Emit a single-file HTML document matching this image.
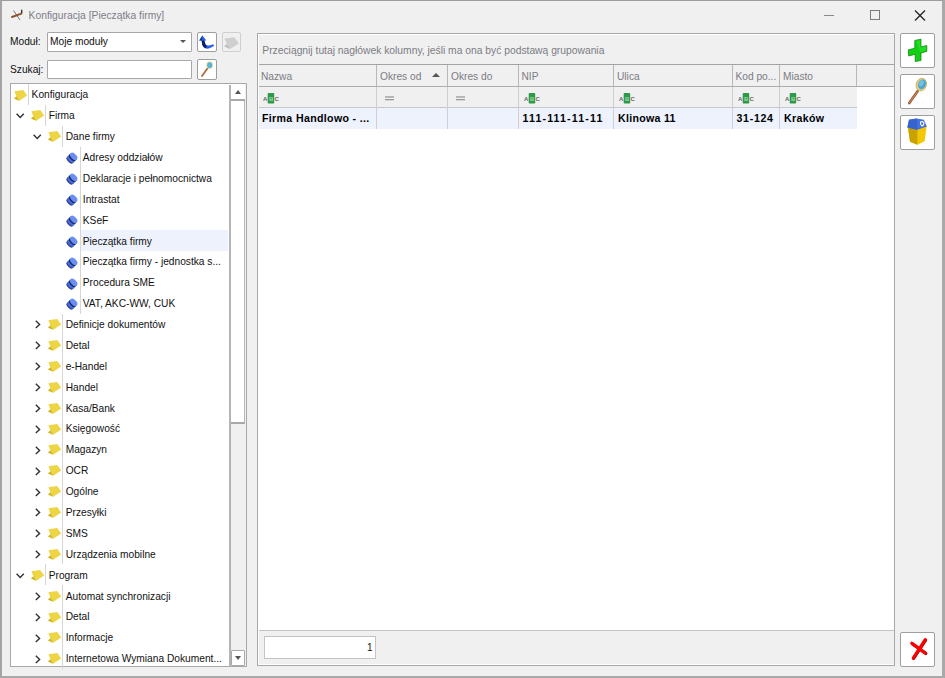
<!DOCTYPE html>
<html><head><meta charset="utf-8">
<style>
*{box-sizing:border-box;margin:0;padding:0}
html,body{width:945px;height:678px;overflow:hidden;background:#f0f0f0;font-family:"Liberation Sans",sans-serif;font-size:10.5px;color:#000}
.a{position:absolute}
svg{display:block}
.title{position:absolute;left:28.6px;top:8.7px;font-size:10.3px;color:#7d7d88;white-space:nowrap;line-height:14px}
.lbl{position:absolute;white-space:nowrap;color:#101010;line-height:14px;font-size:10.2px}
.inp{position:absolute;background:#fff;border:1px solid #a8a8a8;border-radius:1px}
.btn{position:absolute;background:#fff;border:1.6px solid #9e9e9e;border-radius:2px}
.sep{position:absolute;width:1px;background:#d6d6d6}
.hl{position:absolute;background:#edf2fd}
.tt{position:absolute;white-space:nowrap;line-height:20.85px;height:20.85px;color:#111;padding-top:1.4px;font-size:10.2px}
.gh{position:absolute;color:#7c7c84;white-space:nowrap;line-height:14px}
.vl{position:absolute;width:1px}
.dt{position:absolute;font-weight:bold;white-space:nowrap;color:#000;font-size:10.6px;line-height:14px}
</style></head><body>
<div class="a" style="left:0;top:0;width:945px;height:678px;border-left:2px solid #a4a4a4;border-top:1px solid #9c9c9c;border-right:3px solid #a9a9a9;border-bottom:2px solid #a9a9a9"></div>
<!-- title bar -->
<div class="a" style="left:11px;top:9px"><svg width="13" height="12" viewBox="0 0 13 12"><line x1="2.5" y1="1.5" x2="9" y2="11" stroke="#777" stroke-width="1"/><line x1="1" y1="8" x2="10.3" y2="4.6" stroke="#8e5032" stroke-width="2" stroke-linecap="round"/><line x1="10.6" y1="0.8" x2="10.8" y2="4" stroke="#333" stroke-width="1.4"/></svg></div>
<div class="title">Konfiguracja [Pieczątka firmy]</div>
<div class="a" style="left:824px;top:15px;width:10px;height:1px;background:#8a8a8a"></div>
<div class="a" style="left:870px;top:10px;width:10px;height:10px;border:1px solid #7a7a7a"></div>
<div class="a" style="left:914px;top:10px"><svg width="12" height="11" viewBox="0 0 12 11"><line x1="1" y1="0.5" x2="11" y2="10.5" stroke="#222" stroke-width="1.2"/><line x1="11" y1="0.5" x2="1" y2="10.5" stroke="#222" stroke-width="1.2"/></svg></div>

<!-- module / search -->
<div class="lbl" style="left:10px;top:35px">Moduł:</div>
<div class="inp" style="left:47px;top:32px;width:145px;height:19.5px"></div>
<div class="lbl" style="left:50px;top:35px">Moje moduły</div>
<div class="a" style="left:180px;top:40px;width:0;height:0;border-left:3.5px solid transparent;border-right:3.5px solid transparent;border-top:3.5px solid #555"></div>
<div class="btn" style="left:197px;top:32px;width:19.5px;height:20px"></div>
<div class="a" style="left:198px;top:34px"><svg width="18" height="17" viewBox="0 0 18 17"><path d="M4.4 1.6 L1.2 6.6 L3.6 6.6 L4.2 10.5 Q5 14 8.5 14.6 Q11 15 13.2 13.6 Q15 12.4 16.2 12 L15.2 10.2 Q13 11 10.8 11.4 Q8 11.8 7.2 9.6 L6.4 6.6 L8.4 6.6 Z" fill="#2a62e6"/><path d="M3.6 6.6 L4.2 10.5 Q5 13.6 8.2 14.4 L8.6 12 Q7.4 11.2 7.1 9.6 L6.4 6.6 Z" fill="#0e1f5e"/><path d="M4.4 1.6 L1.2 6.6 L4 6.6 Z" fill="#163a9a"/></svg></div>
<div class="a" style="left:222px;top:32px;width:19px;height:20px;border:1.2px solid #cfcfcf;border-radius:2px;background:#f0f0f0"></div>
<div class="a" style="left:223.8px;top:36.6px"><svg width="15.5" height="13" viewBox="0 0 14 12" preserveAspectRatio="none"><polygon points="0.4,1.4 9.4,0.2 13.4,6 5.4,11 0.2,8.6 2.6,6.8" fill="#cfcfcf"/><polygon points="0.2,8.6 2.6,6.8 5.4,11" fill="#bdbdbd"/></svg></div>

<div class="lbl" style="left:10px;top:63px">Szukaj:</div>
<div class="inp" style="left:47px;top:60px;width:145px;height:19px"></div>
<div class="btn" style="left:197px;top:59px;width:20px;height:21px"></div>
<div class="a" style="left:200px;top:61px"><svg width="14" height="17" viewBox="0 0 14 17"><line x1="2" y1="15" x2="7.6" y2="7.2" stroke="#b06a40" stroke-width="1.8" stroke-linecap="round"/><ellipse cx="9.6" cy="4.2" rx="3.2" ry="3.6" fill="#e8d48a"/><ellipse cx="9.7" cy="4.2" rx="2.5" ry="2.9" fill="#5ab4d8"/></svg></div>

<!-- tree -->
<div class="a" style="left:10px;top:83px;width:237px;height:584px;background:#fff;border:1.5px solid #a8a8a8"></div>
<div class="a" style="left:13.8px;top:89.50px"><svg width="14" height="12" viewBox="0 0 14 12"><polygon points="0.4,1.2 9.2,0 13.2,5.6 5.2,10.8 0,8.4 2.4,6.6" fill="#EDD545"/><polygon points="0,8.4 2.4,6.6 5.2,10.8" fill="#CDB22A"/></svg></div>
<div class="sep" style="left:28.0px;top:84.00px;height:20.88px"></div>
<div class="tt" style="left:31.6px;top:84.00px">Konfiguracja</div>
<div class="a" style="left:16.2px;top:113.48px"><svg width="9" height="6" viewBox="0 0 9 6"><polyline points="0.6,0.8 4.2,4.6 7.8,0.8" fill="none" stroke="#333" stroke-width="1.4"/></svg></div>
<div class="a" style="left:30.9px;top:110.38px"><svg width="14" height="12" viewBox="0 0 14 12"><polygon points="0.4,1.2 9.2,0 13.2,5.6 5.2,10.8 0,8.4 2.4,6.6" fill="#EDD545"/><polygon points="0,8.4 2.4,6.6 5.2,10.8" fill="#CDB22A"/></svg></div>
<div class="sep" style="left:45.2px;top:104.88px;height:20.88px"></div>
<div class="tt" style="left:48.7px;top:104.88px">Firma</div>
<div class="a" style="left:33.4px;top:134.36px"><svg width="9" height="6" viewBox="0 0 9 6"><polyline points="0.6,0.8 4.2,4.6 7.8,0.8" fill="none" stroke="#333" stroke-width="1.4"/></svg></div>
<div class="a" style="left:47.9px;top:131.26px"><svg width="14" height="12" viewBox="0 0 14 12"><polygon points="0.4,1.2 9.2,0 13.2,5.6 5.2,10.8 0,8.4 2.4,6.6" fill="#EDD545"/><polygon points="0,8.4 2.4,6.6 5.2,10.8" fill="#CDB22A"/></svg></div>
<div class="sep" style="left:62.4px;top:125.76px;height:20.88px"></div>
<div class="tt" style="left:65.7px;top:125.76px">Dane firmy</div>
<div class="a" style="left:65.6px;top:152.24px"><svg width="12" height="12" viewBox="0 0 12 12"><g transform="rotate(45 6 6)"><rect x="1.8" y="3.4" width="8.4" height="5.6" fill="#3a5cc8"/><ellipse cx="6" cy="9" rx="4.2" ry="2.2" fill="#2a3f9a"/><ellipse cx="6" cy="7.6" rx="4.3" ry="2.3" fill="#4a6fd6"/><ellipse cx="6" cy="5.4" rx="4.3" ry="2.4" fill="#1c2a70"/><ellipse cx="6" cy="3.6" rx="4.4" ry="2.7" fill="#6a8ef2"/></g></svg></div>
<div class="sep" style="left:79.6px;top:146.64px;height:20.88px"></div>
<div class="tt" style="left:82.8px;top:146.64px">Adresy oddziałów</div>
<div class="a" style="left:65.6px;top:173.12px"><svg width="12" height="12" viewBox="0 0 12 12"><g transform="rotate(45 6 6)"><rect x="1.8" y="3.4" width="8.4" height="5.6" fill="#3a5cc8"/><ellipse cx="6" cy="9" rx="4.2" ry="2.2" fill="#2a3f9a"/><ellipse cx="6" cy="7.6" rx="4.3" ry="2.3" fill="#4a6fd6"/><ellipse cx="6" cy="5.4" rx="4.3" ry="2.4" fill="#1c2a70"/><ellipse cx="6" cy="3.6" rx="4.4" ry="2.7" fill="#6a8ef2"/></g></svg></div>
<div class="sep" style="left:79.6px;top:167.52px;height:20.88px"></div>
<div class="tt" style="left:82.8px;top:167.52px">Deklaracje i pełnomocnictwa</div>
<div class="a" style="left:65.6px;top:194.00px"><svg width="12" height="12" viewBox="0 0 12 12"><g transform="rotate(45 6 6)"><rect x="1.8" y="3.4" width="8.4" height="5.6" fill="#3a5cc8"/><ellipse cx="6" cy="9" rx="4.2" ry="2.2" fill="#2a3f9a"/><ellipse cx="6" cy="7.6" rx="4.3" ry="2.3" fill="#4a6fd6"/><ellipse cx="6" cy="5.4" rx="4.3" ry="2.4" fill="#1c2a70"/><ellipse cx="6" cy="3.6" rx="4.4" ry="2.7" fill="#6a8ef2"/></g></svg></div>
<div class="sep" style="left:79.6px;top:188.40px;height:20.88px"></div>
<div class="tt" style="left:82.8px;top:188.40px">Intrastat</div>
<div class="a" style="left:65.6px;top:214.88px"><svg width="12" height="12" viewBox="0 0 12 12"><g transform="rotate(45 6 6)"><rect x="1.8" y="3.4" width="8.4" height="5.6" fill="#3a5cc8"/><ellipse cx="6" cy="9" rx="4.2" ry="2.2" fill="#2a3f9a"/><ellipse cx="6" cy="7.6" rx="4.3" ry="2.3" fill="#4a6fd6"/><ellipse cx="6" cy="5.4" rx="4.3" ry="2.4" fill="#1c2a70"/><ellipse cx="6" cy="3.6" rx="4.4" ry="2.7" fill="#6a8ef2"/></g></svg></div>
<div class="sep" style="left:79.6px;top:209.28px;height:20.88px"></div>
<div class="tt" style="left:82.8px;top:209.28px">KSeF</div>
<div class="a" style="left:65.6px;top:235.76px"><svg width="12" height="12" viewBox="0 0 12 12"><g transform="rotate(45 6 6)"><rect x="1.8" y="3.4" width="8.4" height="5.6" fill="#3a5cc8"/><ellipse cx="6" cy="9" rx="4.2" ry="2.2" fill="#2a3f9a"/><ellipse cx="6" cy="7.6" rx="4.3" ry="2.3" fill="#4a6fd6"/><ellipse cx="6" cy="5.4" rx="4.3" ry="2.4" fill="#1c2a70"/><ellipse cx="6" cy="3.6" rx="4.4" ry="2.7" fill="#6a8ef2"/></g></svg></div>
<div class="sep" style="left:79.6px;top:230.16px;height:20.88px"></div>
<div class="hl" style="left:80.6px;top:230.16px;width:147.9px;height:20.88px"></div>
<div class="tt" style="left:82.8px;top:230.16px">Pieczątka firmy</div>
<div class="a" style="left:65.6px;top:256.64px"><svg width="12" height="12" viewBox="0 0 12 12"><g transform="rotate(45 6 6)"><rect x="1.8" y="3.4" width="8.4" height="5.6" fill="#3a5cc8"/><ellipse cx="6" cy="9" rx="4.2" ry="2.2" fill="#2a3f9a"/><ellipse cx="6" cy="7.6" rx="4.3" ry="2.3" fill="#4a6fd6"/><ellipse cx="6" cy="5.4" rx="4.3" ry="2.4" fill="#1c2a70"/><ellipse cx="6" cy="3.6" rx="4.4" ry="2.7" fill="#6a8ef2"/></g></svg></div>
<div class="sep" style="left:79.6px;top:251.04px;height:20.88px"></div>
<div class="tt" style="left:82.8px;top:251.04px">Pieczątka firmy - jednostka s...</div>
<div class="a" style="left:65.6px;top:277.52px"><svg width="12" height="12" viewBox="0 0 12 12"><g transform="rotate(45 6 6)"><rect x="1.8" y="3.4" width="8.4" height="5.6" fill="#3a5cc8"/><ellipse cx="6" cy="9" rx="4.2" ry="2.2" fill="#2a3f9a"/><ellipse cx="6" cy="7.6" rx="4.3" ry="2.3" fill="#4a6fd6"/><ellipse cx="6" cy="5.4" rx="4.3" ry="2.4" fill="#1c2a70"/><ellipse cx="6" cy="3.6" rx="4.4" ry="2.7" fill="#6a8ef2"/></g></svg></div>
<div class="sep" style="left:79.6px;top:271.92px;height:20.88px"></div>
<div class="tt" style="left:82.8px;top:271.92px">Procedura SME</div>
<div class="a" style="left:65.6px;top:298.40px"><svg width="12" height="12" viewBox="0 0 12 12"><g transform="rotate(45 6 6)"><rect x="1.8" y="3.4" width="8.4" height="5.6" fill="#3a5cc8"/><ellipse cx="6" cy="9" rx="4.2" ry="2.2" fill="#2a3f9a"/><ellipse cx="6" cy="7.6" rx="4.3" ry="2.3" fill="#4a6fd6"/><ellipse cx="6" cy="5.4" rx="4.3" ry="2.4" fill="#1c2a70"/><ellipse cx="6" cy="3.6" rx="4.4" ry="2.7" fill="#6a8ef2"/></g></svg></div>
<div class="sep" style="left:79.6px;top:292.80px;height:20.88px"></div>
<div class="tt" style="left:82.8px;top:292.80px">VAT, AKC-WW, CUK</div>
<div class="a" style="left:34.6px;top:320.48px"><svg width="6" height="9" viewBox="0 0 6 9"><polyline points="0.8,0.8 4.6,4.4 0.8,8" fill="none" stroke="#333" stroke-width="1.4"/></svg></div>
<div class="a" style="left:47.9px;top:319.18px"><svg width="14" height="12" viewBox="0 0 14 12"><polygon points="0.4,1.2 9.2,0 13.2,5.6 5.2,10.8 0,8.4 2.4,6.6" fill="#EDD545"/><polygon points="0,8.4 2.4,6.6 5.2,10.8" fill="#CDB22A"/></svg></div>
<div class="sep" style="left:62.4px;top:313.68px;height:20.88px"></div>
<div class="tt" style="left:65.7px;top:313.68px">Definicje dokumentów</div>
<div class="a" style="left:34.6px;top:341.36px"><svg width="6" height="9" viewBox="0 0 6 9"><polyline points="0.8,0.8 4.6,4.4 0.8,8" fill="none" stroke="#333" stroke-width="1.4"/></svg></div>
<div class="a" style="left:47.9px;top:340.06px"><svg width="14" height="12" viewBox="0 0 14 12"><polygon points="0.4,1.2 9.2,0 13.2,5.6 5.2,10.8 0,8.4 2.4,6.6" fill="#EDD545"/><polygon points="0,8.4 2.4,6.6 5.2,10.8" fill="#CDB22A"/></svg></div>
<div class="sep" style="left:62.4px;top:334.56px;height:20.88px"></div>
<div class="tt" style="left:65.7px;top:334.56px">Detal</div>
<div class="a" style="left:34.6px;top:362.24px"><svg width="6" height="9" viewBox="0 0 6 9"><polyline points="0.8,0.8 4.6,4.4 0.8,8" fill="none" stroke="#333" stroke-width="1.4"/></svg></div>
<div class="a" style="left:47.9px;top:360.94px"><svg width="14" height="12" viewBox="0 0 14 12"><polygon points="0.4,1.2 9.2,0 13.2,5.6 5.2,10.8 0,8.4 2.4,6.6" fill="#EDD545"/><polygon points="0,8.4 2.4,6.6 5.2,10.8" fill="#CDB22A"/></svg></div>
<div class="sep" style="left:62.4px;top:355.44px;height:20.88px"></div>
<div class="tt" style="left:65.7px;top:355.44px">e-Handel</div>
<div class="a" style="left:34.6px;top:383.12px"><svg width="6" height="9" viewBox="0 0 6 9"><polyline points="0.8,0.8 4.6,4.4 0.8,8" fill="none" stroke="#333" stroke-width="1.4"/></svg></div>
<div class="a" style="left:47.9px;top:381.82px"><svg width="14" height="12" viewBox="0 0 14 12"><polygon points="0.4,1.2 9.2,0 13.2,5.6 5.2,10.8 0,8.4 2.4,6.6" fill="#EDD545"/><polygon points="0,8.4 2.4,6.6 5.2,10.8" fill="#CDB22A"/></svg></div>
<div class="sep" style="left:62.4px;top:376.32px;height:20.88px"></div>
<div class="tt" style="left:65.7px;top:376.32px">Handel</div>
<div class="a" style="left:34.6px;top:404.00px"><svg width="6" height="9" viewBox="0 0 6 9"><polyline points="0.8,0.8 4.6,4.4 0.8,8" fill="none" stroke="#333" stroke-width="1.4"/></svg></div>
<div class="a" style="left:47.9px;top:402.70px"><svg width="14" height="12" viewBox="0 0 14 12"><polygon points="0.4,1.2 9.2,0 13.2,5.6 5.2,10.8 0,8.4 2.4,6.6" fill="#EDD545"/><polygon points="0,8.4 2.4,6.6 5.2,10.8" fill="#CDB22A"/></svg></div>
<div class="sep" style="left:62.4px;top:397.20px;height:20.88px"></div>
<div class="tt" style="left:65.7px;top:397.20px">Kasa/Bank</div>
<div class="a" style="left:34.6px;top:424.88px"><svg width="6" height="9" viewBox="0 0 6 9"><polyline points="0.8,0.8 4.6,4.4 0.8,8" fill="none" stroke="#333" stroke-width="1.4"/></svg></div>
<div class="a" style="left:47.9px;top:423.58px"><svg width="14" height="12" viewBox="0 0 14 12"><polygon points="0.4,1.2 9.2,0 13.2,5.6 5.2,10.8 0,8.4 2.4,6.6" fill="#EDD545"/><polygon points="0,8.4 2.4,6.6 5.2,10.8" fill="#CDB22A"/></svg></div>
<div class="sep" style="left:62.4px;top:418.08px;height:20.88px"></div>
<div class="tt" style="left:65.7px;top:418.08px">Księgowość</div>
<div class="a" style="left:34.6px;top:445.76px"><svg width="6" height="9" viewBox="0 0 6 9"><polyline points="0.8,0.8 4.6,4.4 0.8,8" fill="none" stroke="#333" stroke-width="1.4"/></svg></div>
<div class="a" style="left:47.9px;top:444.46px"><svg width="14" height="12" viewBox="0 0 14 12"><polygon points="0.4,1.2 9.2,0 13.2,5.6 5.2,10.8 0,8.4 2.4,6.6" fill="#EDD545"/><polygon points="0,8.4 2.4,6.6 5.2,10.8" fill="#CDB22A"/></svg></div>
<div class="sep" style="left:62.4px;top:438.96px;height:20.88px"></div>
<div class="tt" style="left:65.7px;top:438.96px">Magazyn</div>
<div class="a" style="left:34.6px;top:466.64px"><svg width="6" height="9" viewBox="0 0 6 9"><polyline points="0.8,0.8 4.6,4.4 0.8,8" fill="none" stroke="#333" stroke-width="1.4"/></svg></div>
<div class="a" style="left:47.9px;top:465.34px"><svg width="14" height="12" viewBox="0 0 14 12"><polygon points="0.4,1.2 9.2,0 13.2,5.6 5.2,10.8 0,8.4 2.4,6.6" fill="#EDD545"/><polygon points="0,8.4 2.4,6.6 5.2,10.8" fill="#CDB22A"/></svg></div>
<div class="sep" style="left:62.4px;top:459.84px;height:20.88px"></div>
<div class="tt" style="left:65.7px;top:459.84px">OCR</div>
<div class="a" style="left:34.6px;top:487.52px"><svg width="6" height="9" viewBox="0 0 6 9"><polyline points="0.8,0.8 4.6,4.4 0.8,8" fill="none" stroke="#333" stroke-width="1.4"/></svg></div>
<div class="a" style="left:47.9px;top:486.22px"><svg width="14" height="12" viewBox="0 0 14 12"><polygon points="0.4,1.2 9.2,0 13.2,5.6 5.2,10.8 0,8.4 2.4,6.6" fill="#EDD545"/><polygon points="0,8.4 2.4,6.6 5.2,10.8" fill="#CDB22A"/></svg></div>
<div class="sep" style="left:62.4px;top:480.72px;height:20.88px"></div>
<div class="tt" style="left:65.7px;top:480.72px">Ogólne</div>
<div class="a" style="left:34.6px;top:508.40px"><svg width="6" height="9" viewBox="0 0 6 9"><polyline points="0.8,0.8 4.6,4.4 0.8,8" fill="none" stroke="#333" stroke-width="1.4"/></svg></div>
<div class="a" style="left:47.9px;top:507.10px"><svg width="14" height="12" viewBox="0 0 14 12"><polygon points="0.4,1.2 9.2,0 13.2,5.6 5.2,10.8 0,8.4 2.4,6.6" fill="#EDD545"/><polygon points="0,8.4 2.4,6.6 5.2,10.8" fill="#CDB22A"/></svg></div>
<div class="sep" style="left:62.4px;top:501.60px;height:20.88px"></div>
<div class="tt" style="left:65.7px;top:501.60px">Przesyłki</div>
<div class="a" style="left:34.6px;top:529.28px"><svg width="6" height="9" viewBox="0 0 6 9"><polyline points="0.8,0.8 4.6,4.4 0.8,8" fill="none" stroke="#333" stroke-width="1.4"/></svg></div>
<div class="a" style="left:47.9px;top:527.98px"><svg width="14" height="12" viewBox="0 0 14 12"><polygon points="0.4,1.2 9.2,0 13.2,5.6 5.2,10.8 0,8.4 2.4,6.6" fill="#EDD545"/><polygon points="0,8.4 2.4,6.6 5.2,10.8" fill="#CDB22A"/></svg></div>
<div class="sep" style="left:62.4px;top:522.48px;height:20.88px"></div>
<div class="tt" style="left:65.7px;top:522.48px">SMS</div>
<div class="a" style="left:34.6px;top:550.16px"><svg width="6" height="9" viewBox="0 0 6 9"><polyline points="0.8,0.8 4.6,4.4 0.8,8" fill="none" stroke="#333" stroke-width="1.4"/></svg></div>
<div class="a" style="left:47.9px;top:548.86px"><svg width="14" height="12" viewBox="0 0 14 12"><polygon points="0.4,1.2 9.2,0 13.2,5.6 5.2,10.8 0,8.4 2.4,6.6" fill="#EDD545"/><polygon points="0,8.4 2.4,6.6 5.2,10.8" fill="#CDB22A"/></svg></div>
<div class="sep" style="left:62.4px;top:543.36px;height:20.88px"></div>
<div class="tt" style="left:65.7px;top:543.36px">Urządzenia mobilne</div>
<div class="a" style="left:16.2px;top:572.84px"><svg width="9" height="6" viewBox="0 0 9 6"><polyline points="0.6,0.8 4.2,4.6 7.8,0.8" fill="none" stroke="#333" stroke-width="1.4"/></svg></div>
<div class="a" style="left:30.9px;top:569.74px"><svg width="14" height="12" viewBox="0 0 14 12"><polygon points="0.4,1.2 9.2,0 13.2,5.6 5.2,10.8 0,8.4 2.4,6.6" fill="#EDD545"/><polygon points="0,8.4 2.4,6.6 5.2,10.8" fill="#CDB22A"/></svg></div>
<div class="sep" style="left:45.2px;top:564.24px;height:20.88px"></div>
<div class="tt" style="left:48.7px;top:564.24px">Program</div>
<div class="a" style="left:34.6px;top:591.92px"><svg width="6" height="9" viewBox="0 0 6 9"><polyline points="0.8,0.8 4.6,4.4 0.8,8" fill="none" stroke="#333" stroke-width="1.4"/></svg></div>
<div class="a" style="left:47.9px;top:590.62px"><svg width="14" height="12" viewBox="0 0 14 12"><polygon points="0.4,1.2 9.2,0 13.2,5.6 5.2,10.8 0,8.4 2.4,6.6" fill="#EDD545"/><polygon points="0,8.4 2.4,6.6 5.2,10.8" fill="#CDB22A"/></svg></div>
<div class="sep" style="left:62.4px;top:585.12px;height:20.88px"></div>
<div class="tt" style="left:65.7px;top:585.12px">Automat synchronizacji</div>
<div class="a" style="left:34.6px;top:612.80px"><svg width="6" height="9" viewBox="0 0 6 9"><polyline points="0.8,0.8 4.6,4.4 0.8,8" fill="none" stroke="#333" stroke-width="1.4"/></svg></div>
<div class="a" style="left:47.9px;top:611.50px"><svg width="14" height="12" viewBox="0 0 14 12"><polygon points="0.4,1.2 9.2,0 13.2,5.6 5.2,10.8 0,8.4 2.4,6.6" fill="#EDD545"/><polygon points="0,8.4 2.4,6.6 5.2,10.8" fill="#CDB22A"/></svg></div>
<div class="sep" style="left:62.4px;top:606.00px;height:20.88px"></div>
<div class="tt" style="left:65.7px;top:606.00px">Detal</div>
<div class="a" style="left:34.6px;top:633.68px"><svg width="6" height="9" viewBox="0 0 6 9"><polyline points="0.8,0.8 4.6,4.4 0.8,8" fill="none" stroke="#333" stroke-width="1.4"/></svg></div>
<div class="a" style="left:47.9px;top:632.38px"><svg width="14" height="12" viewBox="0 0 14 12"><polygon points="0.4,1.2 9.2,0 13.2,5.6 5.2,10.8 0,8.4 2.4,6.6" fill="#EDD545"/><polygon points="0,8.4 2.4,6.6 5.2,10.8" fill="#CDB22A"/></svg></div>
<div class="sep" style="left:62.4px;top:626.88px;height:20.88px"></div>
<div class="tt" style="left:65.7px;top:626.88px">Informacje</div>
<div class="a" style="left:34.6px;top:654.56px"><svg width="6" height="9" viewBox="0 0 6 9"><polyline points="0.8,0.8 4.6,4.4 0.8,8" fill="none" stroke="#333" stroke-width="1.4"/></svg></div>
<div class="a" style="left:47.9px;top:653.26px"><svg width="14" height="12" viewBox="0 0 14 12"><polygon points="0.4,1.2 9.2,0 13.2,5.6 5.2,10.8 0,8.4 2.4,6.6" fill="#EDD545"/><polygon points="0,8.4 2.4,6.6 5.2,10.8" fill="#CDB22A"/></svg></div>
<div class="sep" style="left:62.4px;top:647.76px;height:20.88px"></div>
<div class="tt" style="left:65.7px;top:647.76px">Internetowa Wymiana Dokument...</div>
<!-- scrollbar -->
<div class="a" style="left:229px;top:84.5px;width:17px;height:581px;background:#f0f0f0;border-left:2px solid #b4b4b4"></div>
<div class="a" style="left:231px;top:84.5px;width:14px;height:16.5px;background:#fff;border-bottom:2px solid #a8a8a8"></div>
<div class="a" style="left:234.5px;top:90px;width:0;height:0;border-left:3.5px solid transparent;border-right:3.5px solid transparent;border-bottom:4px solid #555"></div>
<div class="a" style="left:231px;top:101px;width:14px;height:323px;background:#fff;border-right:1px solid #b8b8b8;border-bottom:2px solid #a8a8a8"></div>
<div class="a" style="left:230.5px;top:650px;width:14.5px;height:16px;background:#fff;border:1.5px solid #a8a8a8;border-radius:1px"></div>
<div class="a" style="left:234.5px;top:656px;width:0;height:0;border-left:3.5px solid transparent;border-right:3.5px solid transparent;border-top:4px solid #555"></div>

<!-- grid -->
<div class="a" style="left:257px;top:33px;width:638px;height:632.5px;background:#fff;border:1.5px solid #a8a8a8"></div>
<div class="a" style="left:258.5px;top:34.5px;width:635px;height:30px;background:#f0f0f0"></div>
<div class="gh" style="left:262.3px;top:44.3px;font-size:10.3px">Przeciągnij tutaj nagłówek kolumny, jeśli ma ona być podstawą grupowania</div>
<div class="a" style="left:258.5px;top:65px;width:635px;height:22px;background:#f0f0f0;border-bottom:1.5px solid #acacac"></div>
<div class="a" style="left:258.5px;top:63.6px;width:635px;height:1.8px;background:#a4a4a4"></div>
<div class="a" style="left:258.5px;top:87px;width:598px;height:21px;background:#f0f0f0;border-bottom:1px solid #c8c8c8"></div>
<div class="a" style="left:258.5px;top:108px;width:598px;height:20.5px;background:#edf2fd"></div>
<div class="vl" style="left:376.0px;top:65px;height:21px;background:#b8b8b8"></div>
<div class="vl" style="left:376.0px;top:87px;height:41.5px;background:#cfcfcf"></div>
<div class="vl" style="left:447.0px;top:65px;height:21px;background:#b8b8b8"></div>
<div class="vl" style="left:447.0px;top:87px;height:41.5px;background:#cfcfcf"></div>
<div class="vl" style="left:517.5px;top:65px;height:21px;background:#b8b8b8"></div>
<div class="vl" style="left:517.5px;top:87px;height:41.5px;background:#cfcfcf"></div>
<div class="vl" style="left:613.0px;top:65px;height:21px;background:#b8b8b8"></div>
<div class="vl" style="left:613.0px;top:87px;height:41.5px;background:#cfcfcf"></div>
<div class="vl" style="left:731.5px;top:65px;height:21px;background:#b8b8b8"></div>
<div class="vl" style="left:731.5px;top:87px;height:41.5px;background:#cfcfcf"></div>
<div class="vl" style="left:779.0px;top:65px;height:21px;background:#b8b8b8"></div>
<div class="vl" style="left:779.0px;top:87px;height:41.5px;background:#cfcfcf"></div>
<div class="vl" style="left:856.0px;top:65px;height:21px;background:#b8b8b8"></div>
<div class="gh" style="left:261.0px;top:69.5px;font-size:10.2px">Nazwa</div>
<div class="a" style="left:263.1px;top:92.6px"><svg width="16" height="11" viewBox="0 0 16 11"><text x="0" y="8" font-family="Liberation Sans" font-size="6" font-weight="bold" fill="#666">A</text><rect x="4.7" y="0" width="6.5" height="10.5" rx="0.8" fill="#2e9a48"/><text x="5.9" y="8" font-family="Liberation Sans" font-size="6" font-weight="bold" fill="#9fd8a8">B</text><text x="11.6" y="8" font-family="Liberation Sans" font-size="6" font-weight="bold" fill="#666">C</text></svg></div>
<div class="dt" style="left:262.0px;top:111.2px;letter-spacing:0.35px">Firma Handlowo - ...</div>
<div class="gh" style="left:380.0px;top:69.5px;font-size:10.2px">Okres od</div>
<div class="a" style="left:384.5px;top:95.8px"><svg width="10" height="5" viewBox="0 0 10 5"><rect x="0" y="0.3" width="9" height="1.3" fill="#9a9a9a"/><rect x="0" y="3" width="9" height="1.3" fill="#9a9a9a"/></svg></div>
<div class="gh" style="left:451.0px;top:69.5px;font-size:10.2px">Okres do</div>
<div class="a" style="left:455.5px;top:95.8px"><svg width="10" height="5" viewBox="0 0 10 5"><rect x="0" y="0.3" width="9" height="1.3" fill="#9a9a9a"/><rect x="0" y="3" width="9" height="1.3" fill="#9a9a9a"/></svg></div>
<div class="gh" style="left:521.5px;top:69.5px;font-size:10.2px">NIP</div>
<div class="a" style="left:523.6px;top:92.6px"><svg width="16" height="11" viewBox="0 0 16 11"><text x="0" y="8" font-family="Liberation Sans" font-size="6" font-weight="bold" fill="#666">A</text><rect x="4.7" y="0" width="6.5" height="10.5" rx="0.8" fill="#2e9a48"/><text x="5.9" y="8" font-family="Liberation Sans" font-size="6" font-weight="bold" fill="#9fd8a8">B</text><text x="11.6" y="8" font-family="Liberation Sans" font-size="6" font-weight="bold" fill="#666">C</text></svg></div>
<div class="dt" style="left:522.5px;top:111.2px;letter-spacing:1.15px">111-111-11-11</div>
<div class="gh" style="left:617.0px;top:69.5px;font-size:10.2px">Ulica</div>
<div class="a" style="left:619.1px;top:92.6px"><svg width="16" height="11" viewBox="0 0 16 11"><text x="0" y="8" font-family="Liberation Sans" font-size="6" font-weight="bold" fill="#666">A</text><rect x="4.7" y="0" width="6.5" height="10.5" rx="0.8" fill="#2e9a48"/><text x="5.9" y="8" font-family="Liberation Sans" font-size="6" font-weight="bold" fill="#9fd8a8">B</text><text x="11.6" y="8" font-family="Liberation Sans" font-size="6" font-weight="bold" fill="#666">C</text></svg></div>
<div class="dt" style="left:618.0px;top:111.2px;letter-spacing:0.3px">Klinowa 11</div>
<div class="gh" style="left:735.5px;top:69.5px;font-size:10.2px">Kod po...</div>
<div class="a" style="left:737.6px;top:92.6px"><svg width="16" height="11" viewBox="0 0 16 11"><text x="0" y="8" font-family="Liberation Sans" font-size="6" font-weight="bold" fill="#666">A</text><rect x="4.7" y="0" width="6.5" height="10.5" rx="0.8" fill="#2e9a48"/><text x="5.9" y="8" font-family="Liberation Sans" font-size="6" font-weight="bold" fill="#9fd8a8">B</text><text x="11.6" y="8" font-family="Liberation Sans" font-size="6" font-weight="bold" fill="#666">C</text></svg></div>
<div class="dt" style="left:736.5px;top:111.2px;letter-spacing:0.7px">31-124</div>
<div class="gh" style="left:783.0px;top:69.5px;font-size:10.2px">Miasto</div>
<div class="a" style="left:785.1px;top:92.6px"><svg width="16" height="11" viewBox="0 0 16 11"><text x="0" y="8" font-family="Liberation Sans" font-size="6" font-weight="bold" fill="#666">A</text><rect x="4.7" y="0" width="6.5" height="10.5" rx="0.8" fill="#2e9a48"/><text x="5.9" y="8" font-family="Liberation Sans" font-size="6" font-weight="bold" fill="#9fd8a8">B</text><text x="11.6" y="8" font-family="Liberation Sans" font-size="6" font-weight="bold" fill="#666">C</text></svg></div>
<div class="dt" style="left:784.0px;top:111.2px;letter-spacing:0.35px">Kraków</div>
<div class="a" style="left:431.8px;top:73.2px;width:0;height:0;border-left:4.6px solid transparent;border-right:4.6px solid transparent;border-bottom:4.8px solid #555"></div>
<!-- footer -->
<div class="a" style="left:258.5px;top:629.5px;width:635px;height:34.5px;background:#f0f0f0;border-top:1.5px solid #c4c4c4"></div>
<div class="a" style="left:264px;top:636px;width:112px;height:23px;background:#fff;border:1px solid #c4c4c4"></div>
<div class="lbl" style="left:367px;top:641px;font-size:10px">1</div>

<!-- right buttons -->
<div class="btn" style="left:900px;top:33px;width:35px;height:35px"></div>
<div class="a" style="left:900px;top:33px"><svg width="35" height="35" viewBox="0 0 35 35"><polygon points="14.8,7.4 21,6.2 21,13.9 26.8,12.6 26.8,18.4 21,19.9 21,27.5 15.2,28.5 15.2,21.3 8.7,23 8.3,16.8 14.8,15.3" fill="#10d010" stroke="#0a7a0a" stroke-width="0.7" stroke-linejoin="round"/><polygon points="16,8 20.5,7.2 20.5,14.5 26,13.4 26,17.8 20.5,19.3" fill="#2ae82a" opacity="0.6"/></svg></div>
<div class="btn" style="left:900px;top:74px;width:35px;height:35px"></div>
<div class="a" style="left:900px;top:74px"><svg width="35" height="35" viewBox="0 0 35 35"><line x1="9.3" y1="29.1" x2="17.6" y2="17.2" stroke="#9a5a34" stroke-width="2.6" stroke-linecap="round"/><line x1="9.6" y1="28.6" x2="17.4" y2="17.6" stroke="#c88a5c" stroke-width="1" stroke-linecap="round"/><ellipse cx="21.3" cy="10.6" rx="5.2" ry="6.4" transform="rotate(20 21.3 10.6)" fill="#e6cf78" stroke="#b09040" stroke-width="0.5"/><ellipse cx="22" cy="10.3" rx="3.8" ry="5" transform="rotate(20 22 10.3)" fill="#4aa6d0"/><ellipse cx="21.4" cy="9.2" rx="2.2" ry="3.2" transform="rotate(20 21.4 9.2)" fill="#86cce8" opacity="0.7"/></svg></div>
<div class="btn" style="left:900px;top:115px;width:35px;height:35px"></div>
<div class="a" style="left:900px;top:115px"><svg width="35" height="35" viewBox="0 0 35 35"><polygon points="7.7,10.5 17.4,13 26.8,10.5 24.6,26.2 17.4,29.7 10,26.8" fill="#f2c800"/><polygon points="7.7,10.5 17.4,13 17.4,29.7 10,26.8" fill="#c9a200"/><polygon points="9,4.7 16.8,3.6 23.9,4.7 26.8,11.4 17.4,14.8 7.4,12.4" fill="#4272e2"/><polygon points="9,4.7 16.8,3.6 17.4,14.8 7.4,12.4" fill="#3562cc"/><path d="M20.6 7.2 A1.9 2.1 0 1 1 21.2 10.6" fill="none" stroke="#fff" stroke-width="1.1"/><path d="M22.4 10.4 A1.9 2.1 0 0 1 21 6.8" fill="none" stroke="#fff" stroke-width="1.1"/></svg></div>
<div class="btn" style="left:900px;top:632px;width:35px;height:35px"></div>
<div class="a" style="left:900px;top:632px"><svg width="35" height="35" viewBox="0 0 35 35"><line x1="11.8" y1="11.2" x2="25.4" y2="21" stroke="#900" stroke-width="3.2" stroke-linecap="round" transform="translate(0.4 0.5)"/><line x1="25.2" y1="7.6" x2="13.2" y2="26" stroke="#900" stroke-width="3.2" stroke-linecap="round" transform="translate(0.4 0.5)"/><line x1="11.8" y1="11.2" x2="25.4" y2="21" stroke="#f00" stroke-width="3" stroke-linecap="round"/><line x1="25.2" y1="7.6" x2="13.2" y2="26" stroke="#f00" stroke-width="3" stroke-linecap="round"/></svg></div>
</body></html>
